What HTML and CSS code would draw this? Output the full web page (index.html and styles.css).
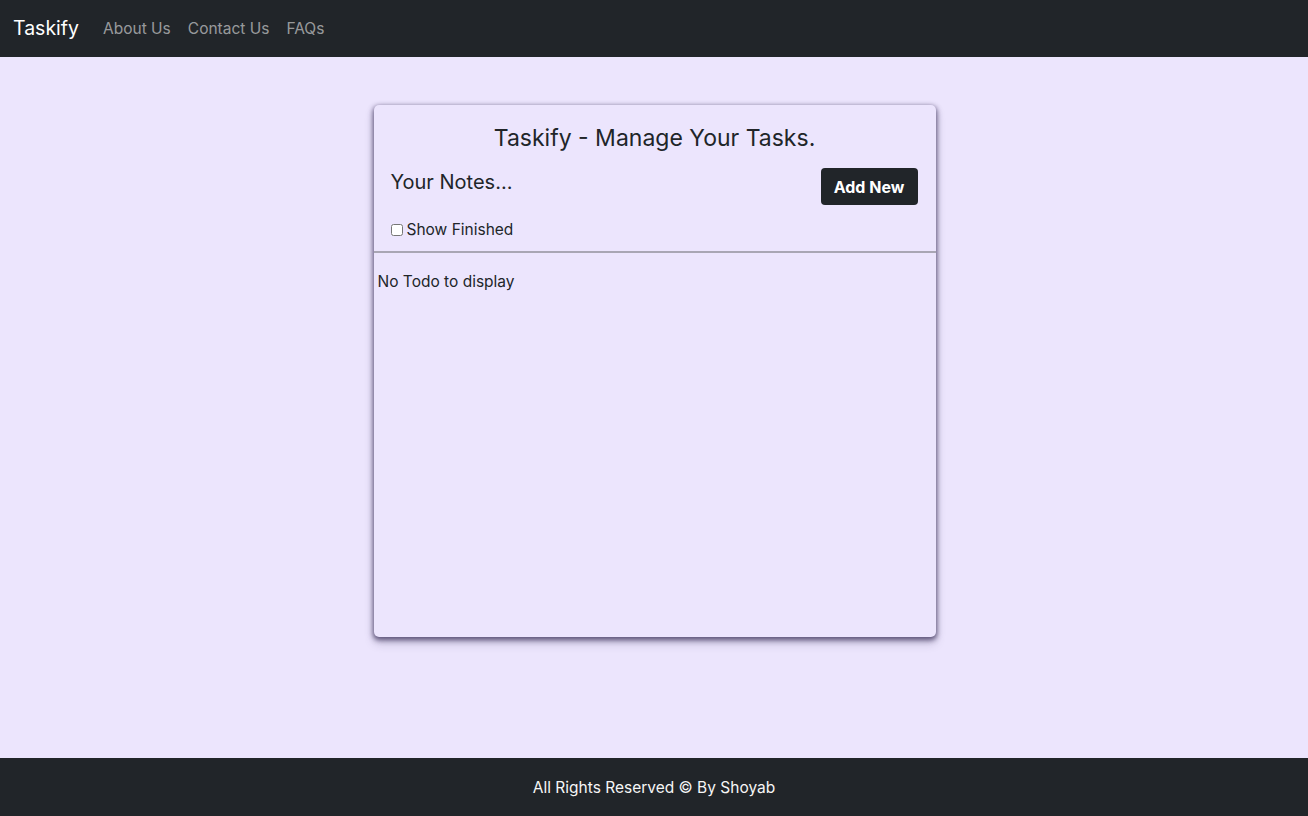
FILE: index.html
```html
<!DOCTYPE html>
<html>
<head>
<meta charset="utf-8">
<link rel="stylesheet" href="styles.css">
</head>
<body>
<nav class="navbar">
  <a class="brand" href="#">Taskify</a>
  <a class="nav-link" href="#">About Us</a>
  <a class="nav-link" href="#">Contact Us</a>
  <a class="nav-link" href="#">FAQs</a>
</nav>
<main class="main">
  <section class="card">
    <div class="card-head">
      <h1 class="title">Taskify - Manage Your Tasks.</h1>
      <div class="row">
        <h2 class="subtitle">Your Notes...</h2>
        <button class="btn">Add New</button>
      </div>
      <label class="check"><input type="checkbox"> Show Finished</label>
    </div>
    <div class="card-body">
      <p class="empty">No Todo to display</p>
    </div>
  </section>
</main>
<footer class="footer">All Rights Reserved © By Shoyab</footer>
</body>
</html>
```
FILE: styles.css
```css
* { box-sizing: border-box; }
html, body { margin: 0; padding: 0; }
body {
  font-family: Inter, "Noto Sans", sans-serif;
  background: #ece5fd;
  color: #212529;
  height: 816px;
  display: flex;
  flex-direction: column;
}
.navbar {
  height: 57px;
  background: #212529;
  display: flex;
  align-items: center;
  padding: 0 13px;
}
.brand {
  color: #fff;
  font-size: 19.5px;
  text-decoration: none;
  margin-right: 24px;
  margin-top: -2px;
}
.nav-link {
  color: rgba(255,255,255,0.55);
  font-size: 15.5px;
  text-decoration: none;
  margin-right: 17px;
  margin-top: -1px;
}
.main {
  flex: 1;
  display: flex;
  justify-content: center;
  padding-top: 48px;
}
.card {
  width: 562px;
  height: 532px;
  border-radius: 5px;
  box-shadow: 0 2px 5px 1px rgba(60, 50, 90, 0.75), 0 6px 10px rgba(60,50,90,0.25);
  display: flex;
  flex-direction: column;
  margin-left: 1px;
}
.card-head {
  padding: 18px 17px 12px;
  border-bottom: 2px solid #a9a6b4;
}
.title {
  margin: 0;
  text-align: center;
  font-size: 23px;
  font-weight: 400;
  line-height: 30px;
}
.row {
  display: flex;
  justify-content: space-between;
  align-items: flex-start;
  margin-top: 13px;
}
.subtitle {
  margin: 3px 0 0;
  font-size: 20px;
  font-weight: 400;
  line-height: 26px;
}
.btn {
  background: #212529;
  color: #fff;
  border: none;
  border-radius: 4px;
  font-family: Inter, "Noto Sans", sans-serif;
  font-weight: 700;
  font-size: 16px;
  width: 97px;
  height: 37px;
  padding: 0;
  margin: 2px 1px 0 0;
}
.check {
  display: flex;
  align-items: center;
  font-size: 15.5px;
  margin-top: 15px;
}
.check input {
  margin: 0 4px 0 0;
  width: 12px;
  height: 12px;
}
.card-body { padding: 19px 4px; }
.empty {
  margin: 0;
  font-size: 15.5px;
}
.footer {
  height: 58px;
  background: #212529;
  color: #f6f6f6;
  font-size: 15.5px;
  display: flex;
  align-items: center;
  justify-content: center;
}
```
